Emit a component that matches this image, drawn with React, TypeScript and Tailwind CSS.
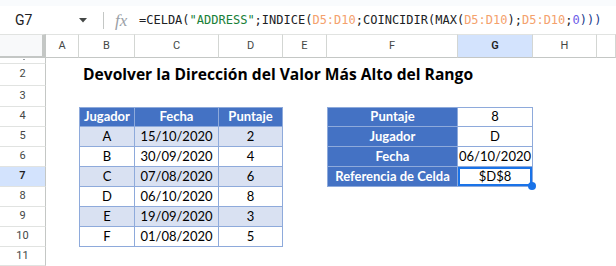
import React from "react";

type CellDef = { text?: React.ReactNode; cls?: string; selected?: boolean };

const COLS = ["A", "B", "C", "D", "E", "F", "G", "H", "I"];
const ROWS = [1, 2, 3, 4, 5, 6, 7, 8, 9, 10, 11];

const leftData: [string, string, string][] = [
  ["A", "15/10/2020", "2"],
  ["B", "30/09/2020", "4"],
  ["C", "07/08/2020", "6"],
  ["D", "06/10/2020", "8"],
  ["E", "19/09/2020", "3"],
  ["F", "01/08/2020", "5"],
];

const rightData: [string, string][] = [
  ["Puntaje", "8"],
  ["Jugador", "D"],
  ["Fecha", "06/10/2020"],
  ["Referencia de Celda", "$D$8"],
];

const HEAD = "bg-[#4472c4] text-white font-bold";
const BORD = "border-r border-b border-[#8eaadb]";

function getCell(r: number, c: string): CellDef {
  if (r === 2 && c === "B") {
    return {
      text: (
        <span className="whitespace-nowrap font-['Open_Sans',sans-serif] font-bold text-[15.6px] text-black pl-[4px]">
          Devolver la Dirección del Valor Más Alto del Rango
        </span>
      ),
      cls: "justify-start overflow-visible",
    };
  }
  // left table
  if (r >= 4 && r <= 10 && (c === "B" || c === "C" || c === "D")) {
    const idx = c === "B" ? 0 : c === "C" ? 1 : 2;
    const cls = BORD + (c === "B" ? " border-l" : "") + (r === 4 ? " border-t" : "");
    if (r === 4) {
      return { text: ["Jugador", "Fecha", "Puntaje"][idx], cls: cls + " " + HEAD };
    }
    const row = leftData[r - 5];
    const shade = r % 2 === 1 ? " bg-[#d9e1f2]" : " bg-white";
    return { text: row[idx], cls: cls + shade + " text-black" };
  }
  // right table
  if (r >= 4 && r <= 7 && (c === "F" || c === "G")) {
    const row = rightData[r - 4];
    const cls = BORD + (c === "F" ? " border-l" : "") + (r === 4 ? " border-t" : "");
    if (c === "F") return { text: row[0], cls: cls + " " + HEAD };
    return {
      text: row[1],
      cls: cls + " bg-white text-black whitespace-nowrap",
      selected: r === 7,
    };
  }
  return {};
}

export default function App() {
  return (
    <div className="w-[616px] h-[266px] overflow-hidden bg-white relative font-['Roboto',sans-serif]">
      {/* top band */}
      <div className="h-[6px] bg-[#f9fbfd]" />
      {/* formula bar */}
      <div className="h-[28px] flex items-center">
        <div className="w-[80px] pl-[15px] text-[14px] text-[#202124] leading-none">G7</div>
        <div className="w-[14px] flex items-center justify-center ml-[-4px]">
          <svg width="8" height="5" viewBox="0 0 8 5">
            <path d="M0 0 L8 0 L4 4.5 Z" fill="#444746" />
          </svg>
        </div>
        <div className="w-[13px]" />
        <div className="w-px h-[17px] bg-[#c4c7c5]" />
        <div className="w-[11px]" />
        <div className="w-[24px] text-[17px] italic text-[#9aa0a6] font-['Liberation_Serif',serif] leading-none">
          fx
        </div>
        <div className="font-['DejaVu_Sans_Mono',monospace] text-[12px] whitespace-nowrap text-[#202124] leading-none">
          <span>=CELDA(</span>
          <span className="text-[#188038]">"ADDRESS"</span>
          <span>;INDICE(</span>
          <span className="text-[#f4a16c]">D5:D10</span>
          <span>;COINCIDIR(MAX(</span>
          <span className="text-[#f4a16c]">D5:D10</span>
          <span>);</span>
          <span className="text-[#f4a16c]">D5:D10</span>
          <span>;</span>
          <span className="text-[#6d5ce8]">0</span>
          <span className="text-[#1a3a8a]">)))</span>
        </div>
      </div>
      {/* sheet grid */}
      <div className="grid grid-cols-[46px_33px_56px_84px_64px_44px_131px_75px_64px_1fr] grid-rows-[24px_6px_22px_21px_20px_20px_20px_20px_20px_20px_20px_19px]">
        {/* corner */}
        <div className="bg-[#f8f9fa] border-t border-t-[#e1e3e1] border-r-[4px] border-r-[#c4c7c5] border-b-[2px] border-b-[#c4c7c5]" />
        {COLS.map((c) => (
          <div
            key={c}
            className={
              "flex items-center justify-center text-[11px] border-t border-t-[#e1e3e1] border-r border-r-[#d3d6d3] border-b-[1px] border-b-[#c4c7c5] " +
              (c === "G" ? "bg-[#d3e3fd] text-[#1f1f1f] font-semibold" : "bg-white text-[#444746]")
            }
          >
            {c === "I" ? "" : c}
          </div>
        ))}
        {ROWS.map((r) => (
          <React.Fragment key={r}>
            <div
              className={
                "flex justify-center text-[11px] border-b border-b-[#e1e3e1] border-r border-r-[#c4c7c5] overflow-hidden " +
                (r === 7 ? "bg-[#d3e3fd] text-[#1f1f1f] font-semibold" : "bg-white text-[#444746]") +
                (r === 1 ? " items-start" : " items-center")
              }
            >
              {r === 1 ? <div className="w-[2px] h-[1px] bg-[#9aa0a6] mt-[1px] ml-[2px]" /> : r}
            </div>
            {COLS.map((c) => {
              const cell = getCell(r, c);
              return (
                <div
                  key={c}
                  className={
                    "relative flex items-center justify-center font-['Lato',sans-serif] text-[13px] " +
                    (cell.cls ?? "")
                  }
                >
                  {cell.text}
                  {cell.selected && (
                    <>
                      <div className="absolute inset-0 border-2 border-[#1a73e8] z-10" />
                      <div className="absolute right-[-4px] bottom-[-4px] w-[8px] h-[8px] rounded-full bg-[#1a73e8] z-20" />
                    </>
                  )}
                </div>
              );
            })}
          </React.Fragment>
        ))}
      </div>
    </div>
  );
}
